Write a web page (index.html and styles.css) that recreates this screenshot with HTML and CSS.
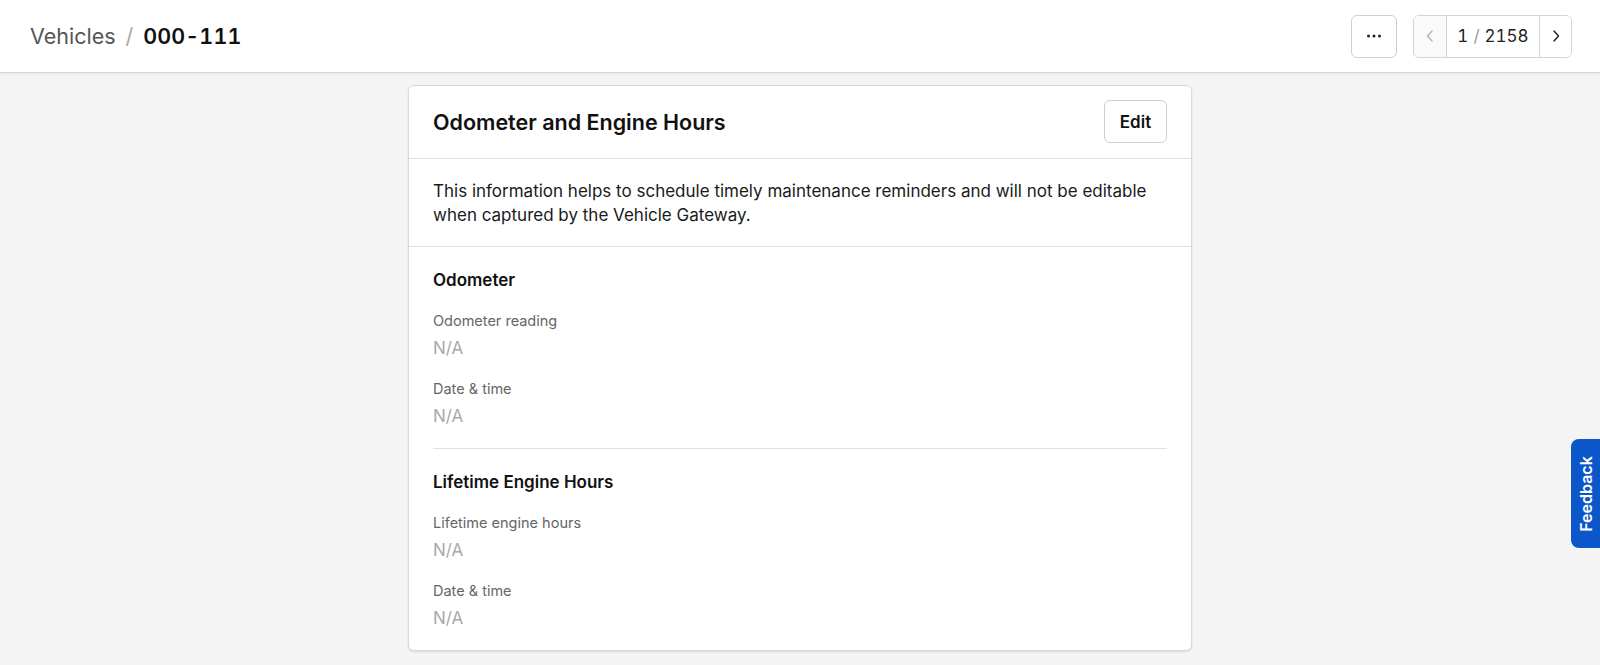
FILE: index.html
```html
<!DOCTYPE html>
<html lang="en">
<head>
<meta charset="utf-8">
<title>Vehicles / 000-111</title>
<link rel="stylesheet" href="styles.css">
</head>
<body>
<header class="topbar">
  <nav class="crumbs">
    <span class="crumb-parent">Vehicles</span>
    <span class="crumb-sep">/</span>
    <span class="crumb-current">000-111</span>
  </nav>
  <div class="actions">
    <button class="btn btn-icon" aria-label="More">
      <svg width="16" height="4" viewBox="0 0 16 4"><circle cx="2.5" cy="2" r="1.5" fill="#222"/><circle cx="8" cy="2" r="1.5" fill="#222"/><circle cx="13.5" cy="2" r="1.5" fill="#222"/></svg>
    </button>
    <div class="pager">
      <button class="pager-btn pager-prev" aria-label="Previous">
        <svg width="10" height="14" viewBox="0 0 10 14"><path d="M7 2 L2.5 7 L7 12" fill="none" stroke="#b5b5b5" stroke-width="1.4" stroke-linecap="round" stroke-linejoin="round"/></svg>
      </button>
      <div class="pager-count">1 <span class="pager-slash">/</span> 2158</div>
      <button class="pager-btn pager-next" aria-label="Next">
        <svg width="10" height="14" viewBox="0 0 10 14"><path d="M3 2 L7.5 7 L3 12" fill="none" stroke="#222" stroke-width="1.4" stroke-linecap="round" stroke-linejoin="round"/></svg>
      </button>
    </div>
  </div>
</header>

<main class="page">
  <section class="card">
    <div class="card-head">
      <h1 class="card-title">Odometer and Engine Hours</h1>
      <button class="btn btn-edit">Edit</button>
    </div>
    <div class="card-desc">
      This information helps to schedule timely maintenance reminders and will not be editable when captured by the Vehicle Gateway.
    </div>
    <div class="card-body">
      <div class="group">
        <h2 class="group-title">Odometer</h2>
        <div class="fields">
          <div class="field">
            <div class="field-label">Odometer reading</div>
            <div class="field-value">N/A</div>
          </div>
          <div class="field">
            <div class="field-label">Date &amp; time</div>
            <div class="field-value">N/A</div>
          </div>
        </div>
      </div>
      <div class="group">
        <h2 class="group-title">Lifetime Engine Hours</h2>
        <div class="fields">
          <div class="field">
            <div class="field-label">Lifetime engine hours</div>
            <div class="field-value">N/A</div>
          </div>
          <div class="field">
            <div class="field-label">Date &amp; time</div>
            <div class="field-value">N/A</div>
          </div>
        </div>
      </div>
    </div>
  </section>
</main>

<button class="feedback-tab"><span class="feedback-text">Feedback</span></button>
</body>
</html>
```

FILE: styles.css
```css
* { box-sizing: border-box; }

html, body {
  margin: 0;
  padding: 0;
}

body {
  background: #f4f4f4;
  font-family: Inter, "Noto Sans", "Liberation Sans", sans-serif;
  color: #111;
  height: 665px;
  overflow: hidden;
}

button {
  font-family: inherit;
  cursor: pointer;
}

.topbar {
  height: 73px;
  background: #fff;
  border-bottom: 1px solid #d6d6d6;
  box-shadow: 0 1px 2px rgba(0, 0, 0, 0.06);
  display: flex;
  align-items: center;
  justify-content: space-between;
  padding: 0 28px 0 30px;
}

.crumbs {
  display: flex;
  align-items: baseline;
  font-size: 21.5px;
  line-height: 28px;
}

.crumb-parent {
  color: #555;
}

.crumb-sep {
  color: #a8a8a8;
  margin: 0 10px;
}

.crumb-current {
  font-weight: 600;
  color: #111;
  font-variant-numeric: tabular-nums;
  letter-spacing: 0.1px;
}

.actions {
  display: flex;
  align-items: center;
  gap: 16px;
}

.btn {
  background: #fff;
  border: 1px solid #cfcfcf;
  border-radius: 6px;
  height: 43px;
  display: flex;
  align-items: center;
  justify-content: center;
  color: #111;
  padding: 0;
}

.btn-icon {
  width: 46px;
}

.pager {
  display: flex;
  height: 43px;
  border: 1px solid #d4d4d4;
  border-radius: 6px;
  overflow: hidden;
  background: #fff;
}

.pager-btn {
  border: none;
  background: #fff;
  display: flex;
  align-items: center;
  justify-content: center;
  padding: 0;
}

.pager-prev {
  width: 33px;
  background: #fafafa;
  border-right: 1px solid #d4d4d4;
}

.pager-next {
  width: 32px;
  border-left: 1px solid #d4d4d4;
}

.pager-count {
  width: 92px;
  display: flex;
  align-items: center;
  justify-content: center;
  font-size: 17px;
  font-variant-numeric: tabular-nums;
  color: #222;
  gap: 5px;
}

.pager-slash {
  color: #999;
}

.page {
  padding-top: 12px;
  display: flex;
  justify-content: center;
}

.card {
  width: 784px;
  background: #fff;
  border: 1px solid #dadada;
  border-radius: 6px;
  box-shadow: 0 1px 2px rgba(0, 0, 0, 0.12);
}

.card-head {
  display: flex;
  align-items: center;
  justify-content: space-between;
  padding: 14px 24px 15px 24px;
  border-bottom: 1px solid #e2e2e2;
}

.card-title {
  margin: 0;
  font-size: 21.5px;
  font-weight: 600;
  line-height: 28px;
  color: #111;
}

.btn-edit {
  width: 63px;
  font-size: 17px;
  font-weight: 600;
}

.card-desc {
  padding: 20px 24px 19px 24px;
  font-size: 17px;
  line-height: 24px;
  color: #1a1a1a;
  border-bottom: 1px solid #e2e2e2;
}

.card-body {
  padding: 0 24px;
}

.group {
  padding: 21px 0 20px 0;
}

.group + .group {
  border-top: 1px solid #e2e2e2;
}

.group-title {
  margin: 0;
  font-size: 17px;
  font-weight: 600;
  line-height: 24px;
  color: #111;
}

.fields {
  margin-top: 19px;
  display: flex;
  flex-direction: column;
  gap: 19px;
}

.field-label {
  font-size: 14.5px;
  line-height: 20px;
  color: #666;
}

.field-value {
  margin-top: 5px;
  font-size: 17px;
  line-height: 24px;
  color: #a9a9a9;
}

.feedback-tab {
  position: fixed;
  right: 0;
  top: 439px;
  width: 29px;
  height: 109px;
  background: #0b56c9;
  border: none;
  border-radius: 8px 0 0 8px;
  padding: 0;
  display: flex;
  align-items: center;
  justify-content: center;
}

.feedback-text {
  color: #fff;
  font-size: 16px;
  font-weight: 600;
  transform: rotate(-90deg);
  white-space: nowrap;
}
```
